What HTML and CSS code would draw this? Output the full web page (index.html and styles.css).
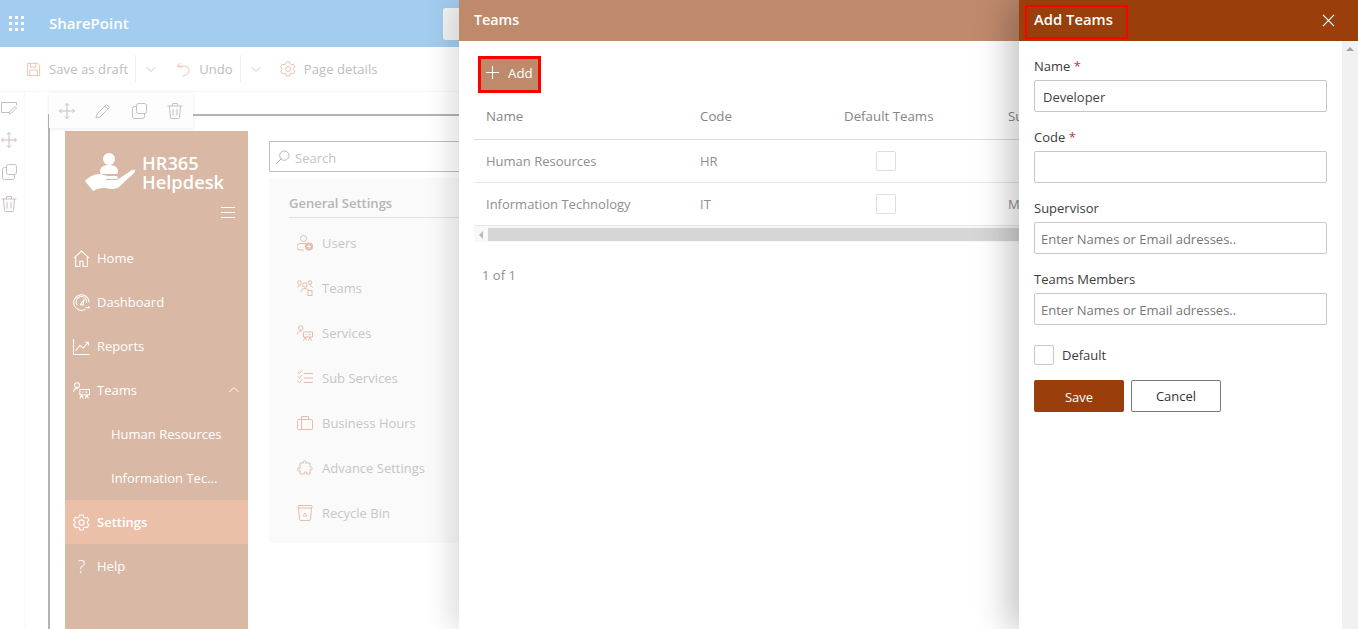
FILE: index.html
```html
<!DOCTYPE html>
<html lang="en">
<head>
    <meta charset="UTF-8">
    <meta name="viewport" content="width=device-width, initial-scale=1.0">
    <title>Teams - SharePoint</title>
    <link rel="stylesheet" href="styles.css">
</head>
<body>

<svg class="sprite" width="0" height="0">
    <symbol id="i-save" viewBox="0 0 16 16"><path d="M1.500 1.500h11l2 2v11h-13zM4.500 1.500v4h6v-4M4 14.500v-6h8v6" fill="none" stroke="currentColor"/></symbol>
    <symbol id="i-undo" viewBox="0 0 16 16"><path d="M5 1L1.500 4.500 6 6M1.500 4.500h8a4.500 4.500 0 0 1 2 8.500L7 15.500" fill="none" stroke="currentColor"/></symbol>
    <symbol id="i-chev" viewBox="0 0 12 12"><path d="M1.500 4l4.500 4.500L10.500 4" fill="none" stroke="currentColor"/></symbol>
    <symbol id="i-gear" viewBox="0 0 16 16"><path d="M6.500 1h3l.5 2 1.500.8 2-.6 1.500 2.600-1.500 1.400v1.600l1.500 1.400-1.500 2.600-2-.6-1.500.8-.5 2h-3l-.5-2-1.500-.8-2 .6L.500 10.200 2 8.800V7.200L.500 5.800 2 3.200l2 .6L5.500 3z" fill="none" stroke="currentColor"/><circle cx="8" cy="8" r="2.500" fill="none" stroke="currentColor"/></symbol>
    <symbol id="i-move" viewBox="0 0 16 16"><path d="M8 .500v15M.500 8h15M5.800 2.700L8 .500l2.200 2.200M5.800 13.300L8 15.500l2.200-2.200M2.700 5.800L.500 8l2.200 2.200M13.300 5.800L15.500 8l-2.200 2.200" fill="none" stroke="currentColor"/></symbol>
    <symbol id="i-pen" viewBox="0 0 16 16"><path d="M11.500 1.500l3 3L5 14l-4 1 1-4zM10 3l3 3" fill="none" stroke="currentColor"/></symbol>
    <symbol id="i-copy" viewBox="0 0 16 16"><rect x="5.500" y=".5" width="10" height="10" rx="2" fill="none" stroke="currentColor"/><path d="M5.500 3.500h-2a2 2 0 0 0-2 2v8a2 2 0 0 0 2 2h8a2 2 0 0 0 2-2v-3" fill="none" stroke="currentColor"/></symbol>
    <symbol id="i-trash" viewBox="0 0 16 16"><path d="M.500 3h15M5.500 3V1a.5.5 0 0 1 .5-.5h4a.5.5 0 0 1 .5.5v2M2.500 3l1 11.500a1 1 0 0 0 1 1h7a1 1 0 0 0 1-1l1-11.500M6 6v6.500M10 6v6.500" fill="none" stroke="currentColor"/></symbol>
    <symbol id="i-note" viewBox="0 0 16 16"><path d="M.500 2.500h15M.500 2.500v10h8M15.500 2.500v3" fill="none" stroke="currentColor"/><path d="M14 6.500l1.500 1.500-5 5-2.500 1 1-2.500z" fill="none" stroke="currentColor"/></symbol>
    <symbol id="i-search" viewBox="0 0 16 16"><circle cx="10" cy="6" r="5" fill="none" stroke="currentColor"/><path d="M6.500 9.500L1 15" fill="none" stroke="currentColor"/></symbol>
    <symbol id="i-home" viewBox="0 0 16 16"><path d="M1 7.500L8 1l7 6.500M2.500 6.500v9h4v-5h3v5h4v-9" fill="none" stroke="currentColor"/></symbol>
    <symbol id="i-dash" viewBox="0 0 16 16"><path d="M11.500 14.500A7.300 7.300 0 1 1 15.300 8" fill="none" stroke="currentColor"/><path d="M4 10.500a5 5 0 1 1 8.800-2" fill="none" stroke="currentColor"/><path d="M7 10l3.500-5-1 5.500zM11.500 13h4l-1.300-1.300" fill="none" stroke="currentColor"/></symbol>
    <symbol id="i-chart" viewBox="0 0 16 16"><path d="M.500 1v14.500h15M2.500 12l4-5 3 2.500 5-5.500M11.500 4h3v3" fill="none" stroke="currentColor"/></symbol>
    <symbol id="i-teams" viewBox="0 0 16 16"><circle cx="3.800" cy="3" r="2.300" fill="none" stroke="currentColor"/><path d="M.500 9.500a3.500 3.500 0 0 1 4.500-3.500M6.500 7h9v5h-9zM8 12l-1.500 3.500M8 12l1.500 3.500M13 12l-1.500 3.500M13 12l1.500 3.500M8.500 9.500h1M11.500 9.500h2" fill="none" stroke="currentColor"/></symbol>
    <symbol id="i-users" viewBox="0 0 16 16"><circle cx="6.500" cy="3.500" r="3" fill="none" stroke="currentColor"/><path d="M7 15H3a2.500 2.500 0 0 1 0-6.500h6" fill="none" stroke="currentColor"/><circle cx="12" cy="11.500" r="4" fill="currentColor"/><path d="M12 9.500v4M10 11.500h4" stroke="#fafafa"/></symbol>
    <symbol id="i-group" viewBox="0 0 16 16"><circle cx="2.500" cy="2.500" r="1.800" fill="none" stroke="currentColor"/><circle cx="13" cy="2.500" r="1.800" fill="none" stroke="currentColor"/><circle cx="7.800" cy="5" r="2.200" fill="none" stroke="currentColor"/><path d="M.500 7.500c.5-1 1.500-2 3-2M15.500 7.500c-.5-1-1.500-2-3-2M4 12c0-2 1.500-3.500 3.800-3.500S11 9.500 11 10" fill="none" stroke="currentColor"/><rect x="11" y="10.500" width="4" height="5" fill="none" stroke="currentColor"/></symbol>
    <symbol id="i-list" viewBox="0 0 16 16"><path d="M7 3.500h9M7 8h9M7 12.500h9M.5 2l2 1.500L5 .500M.5 6.500l2 1.500L5 5M.5 11l2 1.500 2.500-3" fill="none" stroke="currentColor"/></symbol>
    <symbol id="i-case" viewBox="0 0 16 16"><rect x=".5" y="4.500" width="15" height="10" rx="1" fill="none" stroke="currentColor"/><path d="M4.500 14.500v-10M11.500 4.500v-3h-7v3" fill="none" stroke="currentColor"/></symbol>
    <symbol id="i-puzzle" viewBox="0 0 16 16"><path d="M6 1.500c.5-1.500 3-1 3 .5l-.5 1H13v3.500l1 .5c1.500 0 1.500 3 0 3l-1-.5V14H9.500l.5-1c0-1.500-3-1.500-3 0l.5 1H3v-3.500l-1 .5c-2 .5-2-3.500 0-3l1 .5V3h3.500z" fill="none" stroke="currentColor"/></symbol>
    <symbol id="i-bin" viewBox="0 0 16 16"><path d="M1.500 3l1 11a1.500 1.500 0 0 0 1.500 1.500h8a1.500 1.500 0 0 0 1.500-1.500l1-11" fill="none" stroke="currentColor"/><rect x="1" y=".5" width="14" height="2.500" rx="1" fill="none" stroke="currentColor"/><path d="M6 11l2-3 2 3z" fill="none" stroke="currentColor" stroke-width=".8"/></symbol>
    <symbol id="i-up" viewBox="0 0 12 12"><path d="M1.500 8l4.500-4.500L10.500 8" fill="none" stroke="currentColor"/></symbol>
</svg>

<div class="page">
    <header class="suite-bar">
        <span class="waffle"><i></i><i></i><i></i><i></i><i></i><i></i><i></i><i></i><i></i></span>
        <span class="suite-name">SharePoint</span>
        <span class="suite-search"></span>
    </header>

    <div class="command-bar">
        <svg class="cmd-icon"><use href="#i-save"/></svg>
        <span class="cmd-text">Save as draft</span>
        <span class="cmd-sep"></span>
        <svg class="cmd-chev"><use href="#i-chev"/></svg>
        <svg class="cmd-icon undo"><use href="#i-undo"/></svg>
        <span class="cmd-text">Undo</span>
        <span class="cmd-sep"></span>
        <svg class="cmd-chev"><use href="#i-chev"/></svg>
        <svg class="cmd-icon gear"><use href="#i-gear"/></svg>
        <span class="cmd-text">Page details</span>
    </div>

    <div class="edit-area">
        <div class="section-rail">
            <svg><use href="#i-note"/></svg>
            <svg><use href="#i-move"/></svg>
            <svg><use href="#i-copy"/></svg>
            <svg><use href="#i-trash"/></svg>
        </div>
        <div class="webpart-frame">
            <div class="webpart-tools">
                <svg><use href="#i-move"/></svg>
                <svg><use href="#i-pen"/></svg>
                <svg><use href="#i-copy"/></svg>
                <svg><use href="#i-trash"/></svg>
            </div>
            <div class="app">
                <nav class="side-nav">
                    <div class="brand">
                        <svg class="brand-logo" viewBox="0 0 50 40">
                            <circle cx="24" cy="7" r="6" fill="#fff"/>
                            <path d="M15 20c0-5 3-7 9-7s9 2 9 7c0 1-1 2-2 2H17c-1 0-2-1-2-2z" fill="#fff"/>
                            <path d="M0 29c4-4 9-7 14-7 4 0 6 2 10 2h7c2 0 3 3 0 3H21v1h11l15-10c2-1 5 0 2 3L34 35c-5 3-9 2-13 1-3 0-6 0-9 1l-4 2z" fill="#fff"/>
                        </svg>
                        <div class="brand-name">HR365<br>Helpdesk</div>
                    </div>
                    <div class="burger"><i></i><i></i><i></i></div>
                    <a class="nav-item"><svg><use href="#i-home"/></svg>Home</a>
                    <a class="nav-item"><svg><use href="#i-dash"/></svg>Dashboard</a>
                    <a class="nav-item"><svg><use href="#i-chart"/></svg>Reports</a>
                    <a class="nav-item"><svg><use href="#i-teams"/></svg>Teams<svg class="nav-caret"><use href="#i-up"/></svg></a>
                    <a class="nav-item sub">Human Resources</a>
                    <a class="nav-item sub">Information Tec...</a>
                    <a class="nav-item active"><svg><use href="#i-gear"/></svg>Settings</a>
                    <a class="nav-item"><span class="nav-help">?</span>Help</a>
                </nav>
                <div class="settings-col">
                    <div class="search-box"><svg><use href="#i-search"/></svg>Search</div>
                    <div class="settings-card">
                        <div class="settings-title">General Settings</div>
                        <div class="settings-item"><svg><use href="#i-users"/></svg>Users</div>
                        <div class="settings-item"><svg><use href="#i-group"/></svg>Teams</div>
                        <div class="settings-item"><svg><use href="#i-teams"/></svg>Services</div>
                        <div class="settings-item"><svg><use href="#i-list"/></svg>Sub Services</div>
                        <div class="settings-item"><svg><use href="#i-case"/></svg>Business Hours</div>
                        <div class="settings-item"><svg><use href="#i-puzzle"/></svg>Advance Settings</div>
                        <div class="settings-item"><svg><use href="#i-bin"/></svg>Recycle Bin</div>
                    </div>
                </div>
            </div>
        </div>
    </div>
</div>

<!-- first panel -->
<section class="panel panel-list">
    <div class="panel-head">Teams</div>
    <div class="panel-body">
        <button class="add-btn"><span class="add-plus"></span>Add</button>
        <table class="teams-table">
            <thead>
                <tr><th class="col-name">Name</th><th class="col-code">Code</th><th class="col-def">Default Teams</th><th>Supervisor</th></tr>
            </thead>
            <tbody>
                <tr><td>Human Resources</td><td>HR</td><td class="cell-check"><span class="check"></span></td><td></td></tr>
                <tr><td>Information Technology</td><td>IT</td><td class="cell-check"><span class="check"></span></td><td>M</td></tr>
            </tbody>
        </table>
        <div class="h-scroll"><span class="h-arrow"></span><span class="h-thumb"></span></div>
        <div class="pager">1 of 1</div>
    </div>
</section>

<!-- second panel -->
<section class="panel panel-form">
    <div class="form-head">
        <span class="form-title">Add Teams</span>
        <svg class="form-close" viewBox="0 0 14 14"><path d="M1 1l12 12M13 1L1 13" fill="none" stroke="#fff" stroke-width="1.300"/></svg>
    </div>
    <div class="form-wrap">
        <form class="form-body">
            <label class="field-label">Name <b>*</b></label>
            <div class="field-input">Developer</div>
            <label class="field-label">Code <b>*</b></label>
            <div class="field-input"></div>
            <label class="field-label">Supervisor</label>
            <div class="field-input placeholder">Enter Names or Email adresses..</div>
            <label class="field-label">Teams Members</label>
            <div class="field-input placeholder">Enter Names or Email adresses..</div>
            <div class="default-row"><span class="check big"></span>Default</div>
            <div class="form-btns">
                <button type="button" class="btn-save">Save</button>
                <button type="button" class="btn-cancel">Cancel</button>
            </div>
        </form>
        <div class="v-scroll"><span class="v-arrow"></span></div>
    </div>
</section>

</body>
</html>
```

FILE: styles.css
```css
* {
    box-sizing: border-box;
}
body {
    margin: 0;
    height: 629px;
    overflow: hidden;
    position: relative;
    font-family: 'Open Sans', 'Noto Sans', sans-serif;
    font-size: 13px;
    background-color: #ffffff;
}
.sprite {
    position: absolute;
}

/* background page */
.suite-bar {
    height: 47px;
    background-color: #a3cdf0;
    display: flex;
    align-items: center;
    color: #fff;
}
.waffle {
    width: 16px;
    margin-left: 9px;
    display: grid;
    grid-template-columns: repeat(3, 3px);
    gap: 3px;
}
.waffle i {
    width: 3px;
    height: 3px;
    background-color: #fff;
}
.suite-name {
    margin: -2px 0 0 24px;
    font-size: 15px;
    font-weight: 600;
}
.suite-search {
    margin-left: 314px;
    width: 30px;
    height: 32px;
    background-color: #f4f4f4;
    border-radius: 3px;
}
.command-bar {
    height: 45px;
    display: flex;
    align-items: center;
    padding-left: 26px;
    border-bottom: 1px solid #f6f6f6;
    color: #bdbdbd;
}
.cmd-text {
    letter-spacing: 0.1px;
}
.cmd-icon {
    width: 15px;
    height: 15px;
    color: #efbfa8;
    margin-right: 8px;
}
.cmd-icon.undo {
    margin-left: 19px;
}
.cmd-icon.gear {
    width: 16px;
    height: 16px;
    margin-left: 18px;
}
.cmd-sep {
    width: 1px;
    height: 28px;
    background-color: #eee;
    margin-left: 7px;
}
.cmd-chev {
    width: 12px;
    height: 12px;
    margin-left: 9px;
    color: #c9c9c9;
}
.edit-area {
    display: flex;
}
.section-rail {
    width: 25px;
    height: 537px;
    padding: 8px 0 0 1px;
    border-right: 1px solid #f8f8f8;
    display: flex;
    flex-direction: column;
    gap: 16px;
    color: #c9bcc6;
}
.section-rail svg {
    width: 16px;
    height: 16px;
}
.webpart-frame {
    margin: 22px 0 0 23px;
    flex: 1;
    border-left: 2px solid #b3b3b3;
    border-top: 2px solid #b3b3b3;
    padding: 15px 0 0 15px;
    position: relative;
}
.webpart-tools {
    position: absolute;
    left: -1px;
    top: -23px;
    width: 144px;
    height: 35px;
    background-color: #fdfdfd;
    box-shadow: 0 1px 4px rgba(0, 0, 0, 0.08);
    display: flex;
    align-items: center;
    gap: 20px;
    padding-left: 10px;
    color: #c9bcc6;
}
.webpart-tools svg {
    width: 16px;
    height: 16px;
}
.app {
    display: flex;
}
.side-nav {
    width: 183px;
    height: 498px;
    background-color: #d9b8a5;
    color: #fff;
}
.brand {
    display: flex;
    padding: 21px 0 0 20px;
}
.brand-logo {
    width: 50px;
    height: 40px;
    margin-right: 7px;
}
.brand-name {
    font-size: 18.300px;
    font-weight: 600;
    line-height: 19px;
    margin-top: 1px;
}
.burger {
    display: flex;
    flex-direction: column;
    gap: 4px;
    width: 14px;
    margin: 15px 0 18px 156px;
}
.burger i {
    height: 1px;
    background-color: #fff;
}
.nav-item {
    height: 44px;
    display: flex;
    align-items: center;
    padding-left: 8px;
}
.nav-item svg {
    width: 17px;
    height: 17px;
    margin-right: 7px;
}
.nav-item .nav-caret {
    width: 12px;
    height: 12px;
    margin: 0 8px 0 auto;
}
.nav-item.sub {
    padding-left: 46px;
}
.nav-item.active {
    background-color: #ecbfa8;
    font-weight: 600;
}
.nav-help {
    width: 17px;
    margin-right: 7px;
    text-align: center;
    font-size: 18px;
    font-weight: 300;
}
.settings-col {
    margin-left: 21px;
    flex: 1;
    padding-top: 10px;
}
.search-box {
    height: 31px;
    border: 1px solid #bdbdbd;
    border-right: none;
    border-radius: 2px 0 0 2px;
    display: flex;
    align-items: center;
    padding: 2px 0 0 5px;
    color: #c4c4c4;
}
.search-box svg {
    width: 15px;
    height: 15px;
    margin-right: 5px;
    color: #b9aeb6;
}
.settings-card {
    margin-top: 6px;
    height: 365px;
    background-color: #fafafa;
    padding: 16px 0 0 20px;
}
.settings-title {
    height: 24px;
    margin-bottom: 2px;
    border-bottom: 1px solid #e2e2e2;
    color: #b5b5b5;
    font-weight: 600;
}
.settings-item {
    height: 45px;
    display: flex;
    align-items: center;
    padding-left: 8px;
    color: #c6c6c6;
}
.settings-item svg {
    width: 16px;
    height: 16px;
    margin-right: 9px;
    color: #e3bda9;
}

/* slide-in panels */
.panel {
    position: absolute;
    top: 0;
    bottom: 0;
    right: 0;
    background-color: #fff;
}
.panel-list {
    left: 459px;
    box-shadow: -10px 0 24px rgba(0, 0, 0, 0.12);
}
.panel-head {
    height: 41px;
    background-color: #bf8a6c;
    color: #fff;
    font-size: 14.300px;
    font-weight: 600;
    padding: 10px 0 0 15px;
}
.panel-body {
    padding: 15px 0 0 15px;
}
.add-btn {
    display: flex;
    align-items: center;
    width: 63px;
    height: 37px;
    margin-left: 4px;
    padding: 0 0 4px 5px;
    background-color: #bf8a6c;
    border: 3px solid #f00;
    color: #fff;
    font-family: inherit;
    font-size: 13.300px;
}
.add-plus {
    width: 13px;
    height: 13px;
    margin-right: 9px;
    background: linear-gradient(#fff, #fff) center / 100% 1px no-repeat, linear-gradient(#fff, #fff) center / 1px 100% no-repeat;
}
.teams-table {
    width: 900px;
    margin-top: 1px;
    border-collapse: collapse;
    table-layout: fixed;
    color: #8f8f8f;
}
.teams-table th {
    height: 45px;
    text-align: left;
    font-weight: 500;
    font-size: 13.300px;
    padding-left: 12px;
    color: #858585;
    border-bottom: 1px solid #dcdcdc;
}
.teams-table td {
    height: 43px;
    padding-left: 12px;
    border-bottom: 1px solid #e6e6e6;
}
.col-name {
    width: 214px;
}
.col-code {
    width: 144px;
}
.col-def {
    width: 164px;
}
.teams-table .cell-check {
    padding-left: 44px;
}
.check {
    display: block;
    width: 20px;
    height: 20px;
    background-color: #fff;
    border: 1px solid #dddddd;
    border-radius: 2px;
}
.h-scroll {
    display: flex;
    height: 16px;
    padding-top: 2px;
    background-color: #f8f8f8;
}
.h-arrow {
    width: 0;
    height: 0;
    margin: 3px 5px 0 5px;
    border: 4px solid transparent;
    border-right: 4px solid #bbb;
    border-left: none;
}
.h-thumb {
    flex: 1;
    height: 13px;
    background-color: #d6d6d6;
}
.pager {
    margin: 24px 0 0 8px;
    color: #8f8f8f;
}
.panel-form {
    left: 1019px;
    box-shadow: -12px 0 30px rgba(0, 0, 0, 0.22);
}
.form-head {
    height: 41px;
    background-color: #9a3f0c;
    display: flex;
    align-items: center;
    justify-content: space-between;
    padding-right: 23px;
    color: #fff;
}
.form-title {
    margin: 3px 0 0 6px;
    height: 34px;
    width: 103px;
    padding: 2px 0 0 7px;
    border: 2px solid #f00;
    font-size: 14.800px;
    font-weight: 600;
}
.form-close {
    width: 13px;
    height: 13px;
}
.form-wrap {
    display: flex;
    height: 588px;
}
.form-body {
    flex: 1;
    padding: 15px 15px 0 15px;
}
.field-label {
    display: block;
    height: 24px;
    padding-top: 1px;
    color: #3c3c3c;
    font-weight: 500;
}
.field-label b {
    color: #b8394a;
    font-weight: 400;
}
.field-input {
    height: 32px;
    margin-bottom: 15px;
    padding: 1px 8px 0;
    display: flex;
    align-items: center;
    border: 1px solid #c8c8c8;
    border-radius: 2px;
    color: #444;
}
.field-input.placeholder {
    padding-left: 6px;
    color: #777;
}
.default-row {
    display: flex;
    align-items: center;
    gap: 8px;
    margin-top: 20px;
    color: #3c3c3c;
    font-weight: 500;
}
.check.big {
    border-color: #c8c8c8;
}
.form-btns {
    display: flex;
    gap: 7px;
    margin-top: 15px;
}
.form-btns button {
    width: 90px;
    height: 32px;
    font-family: inherit;
    font-size: 13px;
    border-radius: 2px;
}
.btn-save {
    background-color: #9a3f0c;
    border: none;
    color: #fff;
    padding-top: 3px;
    border-radius: 0;
}
.btn-cancel {
    background-color: #fff;
    border: 1px solid #777;
    color: #333;
}
.v-scroll {
    width: 16px;
    background-color: #f1f1f1;
    padding: 6px 0 0 4px;
}
.v-arrow {
    display: block;
    width: 0;
    height: 0;
    border: 4px solid transparent;
    border-bottom: 4px solid #a3a3a3;
    border-top: none;
}
```
